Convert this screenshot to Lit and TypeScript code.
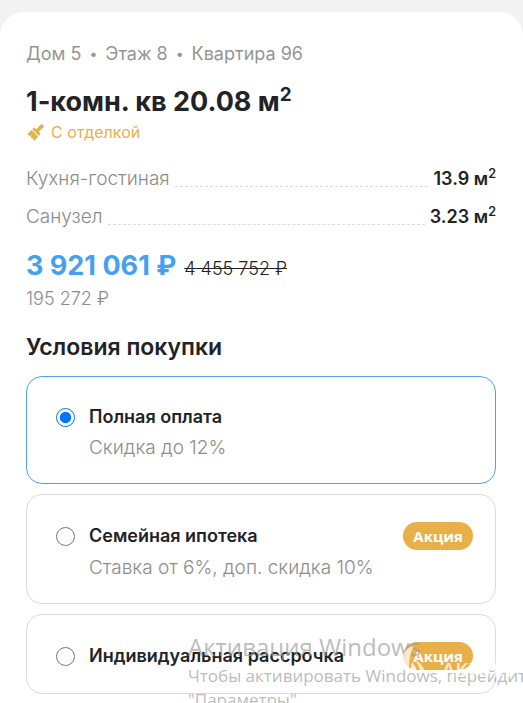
import { LitElement, html, css, svg, nothing } from "lit";
import { customElement, state } from "lit/decorators.js";
import { classMap } from "lit/directives/class-map.js";

interface Room {
  name: string;
  area: string;
}

interface Offer {
  id: string;
  title: string;
  note?: string;
  promo?: boolean;
}

const ROOMS: Room[] = [
  { name: "Кухня-гостиная", area: "13.9" },
  { name: "Санузел", area: "3.23" },
];

const OFFERS: Offer[] = [
  { id: "full", title: "Полная оплата", note: "Скидка до 12%" },
  { id: "family", title: "Семейная ипотека", note: "Ставка от 6%, доп. скидка 10%", promo: true },
  { id: "plan", title: "Индивидуальная рассрочка", promo: true },
];

const brush = svg`
  <g transform="translate(10 9) rotate(45) scale(.86)">
    <path d="M-2.400-9.300C-2.400-10.800-1.300-11.500 0-11.500S2.400-10.800 2.400-9.300L1.900-3.500C1.900-2.600 2.600-2.300 3.600-2.300H4.200C5-2.300 5.400-1.800 5.400-1.200V.8H-5.400V-1.200C-5.400-1.800-5-2.300-4.200-2.300H-3.600C-2.600-2.300-1.900-2.600-1.900-3.500z"/>
    <path d="M-5.400 2H5.400L6 8.500H2.800L2.300 6.200 2 8.500H-.6L-1 5.500-1.600 8.500H-5.200C-5.600 6.500-5.600 4-5.400 2z"/>
  </g>`;

@customElement("app-root")
export class AppRoot extends LitElement {
  @state() private selected = "full";

  static styles = css`
    :host {
      display: block;
      position: relative;
      overflow: hidden;
      min-height: 100vh;
      box-sizing: border-box;
      padding-top: 12px;
      background: #f2f2f2;
      color: #212326;
      font-family: Inter, "Liberation Sans", sans-serif;
      font-size: 18px;
      line-height: 24px;
    }
    .sheet {
      box-sizing: border-box;
      min-height: calc(100vh - 12px);
      padding: 30px 27px 8px 26px;
      border-radius: 24px 24px 0 0;
      background: #fff;
    }
    .path {
      display: flex;
      gap: 8px;
      margin: 0;
      padding: 0;
      list-style: none;
      color: #959595;
    }
    .path li {
      display: flex;
      gap: 8px;
    }
    .path li + li::before {
      content: "•";
      font-size: 14px;
    }
    h1 {
      margin: 18px 0 0;
      font-size: 27px;
      font-weight: 700;
      line-height: 36px;
    }
    sup {
      font-size: 70%;
      line-height: 0;
      vertical-align: super;
    }
    .finish {
      display: flex;
      align-items: center;
      gap: 7px;
      color: #e9b04a;
      font-size: 16px;
      font-weight: 400;
    }
    .brush {
      width: 18px;
      height: 18px;
      fill: #e9b04a;
    }
    .rooms {
      display: grid;
      gap: 14px;
      margin: 23px 0 0;
    }
    .room {
      display: flex;
      gap: 5px;
    }
    dt {
      color: #8c8c8c;
      font-size: 19px;
      font-weight: 300;
    }
    dd {
      margin: 0;
      font-weight: 600;
    }
    .leader {
      flex: 1;
      height: 19px;
      border-bottom: 1px dashed #dcdcdc;
    }
    .price {
      display: flex;
      align-items: baseline;
      gap: 8px;
      margin: 17px 0 0;
      line-height: 40px;
    }
    .now {
      color: #46a0f0;
      font-size: 27px;
      font-weight: 700;
    }
    .was {
      font-weight: 300;
      line-height: 24px;
    }
    .meter {
      margin: 1px 0 0;
      color: #8c8c8c;
      font-weight: 300;
    }
    h2 {
      margin: 20px 0 13px;
      font-size: 23px;
      font-weight: 600;
      line-height: 32px;
    }
    .offers {
      display: grid;
      gap: 10px;
      margin: 0;
      padding: 0;
      border: 0;
    }
    .offer {
      display: grid;
      grid-template-columns: 19px 1fr auto;
      column-gap: 14px;
      row-gap: 6px;
      align-items: center;
      padding: 27px 22px 23px 29px;
      border: 1px solid #d8dce0;
      border-radius: 16px;
      cursor: pointer;
    }
    .offer.on {
      border-color: #4ea3ea;
    }
    .offer input {
      width: 19px;
      height: 19px;
      margin: 0;
      accent-color: #0075ff;
    }
    .title {
      font-weight: 600;
      line-height: 26px;
    }
    .note {
      grid-column: 2 / -1;
      color: #8c8c8c;
      font-size: 19px;
      font-weight: 300;
    }
    .badge {
      padding: 0 10px;
      border-radius: 14px;
      background: #e9b04a;
      color: #fff;
      font-family: "Open Sans", "Noto Sans", sans-serif;
      font-size: 15px;
      font-weight: 700;
      line-height: 28px;
    }
    .notice {
      position: absolute;
      top: 631px;
      left: 188px;
      color: #999a;
      font-family: "Open Sans", "Noto Sans", sans-serif;
      font-size: 17px;
      line-height: 24px;
      white-space: nowrap;
      pointer-events: none;
    }
    .notice p {
      margin: 0;
    }
    .notice .head {
      font-size: 24px;
      line-height: 32px;
      padding-bottom: 1px;
    }
    .brand {
      position: absolute;
      top: 645px;
      left: 402px;
      display: flex;
      gap: 12px;
      color: #fffc;
      font-family: "Open Sans", sans-serif;
      font-size: 20px;
      font-weight: 600;
      line-height: 50px;
      pointer-events: none;
    }
    .brand svg {
      width: 28px;
      height: 32px;
      fill: #fffb;
    }
  `;

  private renderOffer(o: Offer) {
    const on = this.selected === o.id;
    return html`<label class=${classMap({ offer: true, on })}>
      <input
        type="radio"
        name="offer"
        .value=${o.id}
        .checked=${on}
        @change=${() => (this.selected = o.id)}
      />
      <span class="title">${o.title}</span>
      ${o.promo ? html`<span class="badge">Акция</span>` : html`<span></span>`}
      ${o.note ? html`<span class="note">${o.note}</span>` : nothing}
    </label>`;
  }

  render() {
    return html`
      <main class="sheet">
        <ul class="path">
          <li>Дом 5</li>
          <li>Этаж 8</li>
          <li>Квартира 96</li>
        </ul>
        <h1>1-комн. кв 20.08 м<sup>2</sup></h1>
        <div class="finish">
          <svg class="brush" viewBox="0 0 18 18" aria-hidden="true">${brush}</svg>
          <span>С отделкой</span>
        </div>
        <dl class="rooms">
          ${ROOMS.map(
            (r) => html`<div class="room">
              <dt>${r.name}</dt>
              <span class="leader"></span>
              <dd>${r.area} м<sup>2</sup></dd>
            </div>`
          )}
        </dl>
        <p class="price"><span class="now">3 921 061 ₽</span><s class="was">4 455 752 ₽</s></p>
        <p class="meter">195 272 ₽</p>
        <h2 id="terms">Условия покупки</h2>
        <fieldset class="offers" aria-labelledby="terms">
          ${OFFERS.map((o) => this.renderOffer(o))}
        </fieldset>
      </main>
      <aside class="notice">
        <p class="head">Активация Windows</p>
        <p>Чтобы активировать Windows, перейдит</p>
        <p>"Параметры"</p>
      </aside>
      <div class="brand">
        <svg viewBox="0 0 28 32" aria-hidden="true">
          <path d="M12 1c-7 1-11 6-11 12 0 5 2 9 6 12 0-9 1-18 5-24z" />
          <path d="M13 15c5 2 9 7 10 13l-5-1c0-4-2-8-5-12z" />
          <path d="M10 17c3 3 5 7 5 11l-6-1c-1-4 0-7 1-10z" />
        </svg>
        <span>АКИЛА</span>
      </div>
    `;
  }
}
